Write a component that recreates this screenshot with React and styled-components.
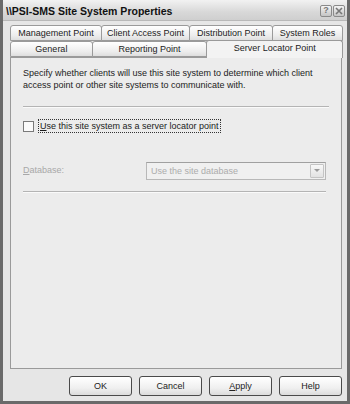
import React from "react";
import styled, { createGlobalStyle } from "styled-components";

const GlobalStyle = createGlobalStyle`
  html, body {
    margin: 0;
    padding: 0;
    background: #e4e4e4;
  }
  * {
    box-sizing: border-box;
  }
`;

const Window = styled.div`
  width: 350px;
  height: 404px;
  display: flex;
  flex-direction: column;
  background: #e6e6e6;
  border-left: 3px solid #6a6a6a;
  border-right: 3px solid #6a6a6a;
  border-bottom: 3px solid #6a6a6a;
  font-family: "Liberation Sans", Arial, sans-serif;
  font-size: 9px;
  color: #1a1a1a;
  overflow: hidden;
`;

const TitleBar = styled.div`
  height: 21px;
  margin: 0 -3px;
  padding: 1px 5px 0 6px;
  display: flex;
  align-items: center;
  justify-content: space-between;
  background: linear-gradient(#f2f2f2, #d8d8d8 60%, #cfcfcf);
  border-bottom: 1px solid #b8b8b8;
`;

const Title = styled.div`
  font-weight: bold;
  font-size: 10.5px;
  color: #111;
`;

const Caption = styled.div`
  display: flex;
  gap: 1px;
`;

const CaptionButton = styled.div`
  width: 12px;
  height: 12px;
  border: 1px solid #8a8a8a;
  border-radius: 2px;
  background: linear-gradient(#f4f4f4, #c4c4c4);
  display: flex;
  align-items: center;
  justify-content: center;
  font-size: 9px;
  font-weight: bold;
  color: #777;
  line-height: 1;
`;

const Body = styled.div`
  flex: 1;
  display: flex;
  flex-direction: column;
  padding: 4px 5px 0 7px;
`;

const TabRow = styled.div`
  display: flex;
  height: 16px;
  position: relative;
  z-index: ${(p) => p.$z};
`;

const Tab = styled.div`
  width: ${(p) => p.$w}px;
  height: ${(p) => (p.$active ? 18 : 16)}px;
  margin-top: ${(p) => (p.$active ? -1 : 0)}px;
  border: 1px solid #9a9a9a;
  border-bottom: ${(p) => (p.$active ? "none" : "1px solid #9a9a9a")};
  border-radius: 3px 3px 0 0;
  background: ${(p) =>
    p.$active ? "#f3f3f3" : "linear-gradient(#ffffff, #ececec 70%, #dedede)"};
  display: flex;
  align-items: center;
  justify-content: center;
  font-size: 9px;
  color: #222;
  white-space: nowrap;
  margin-right: -1px;
  padding-bottom: ${(p) => (p.$active ? 3 : 0)}px;
`;

const Panel = styled.div`
  height: 312px;
  border: 1px solid #9a9a9a;
  background: #ececec;
  padding: 9px 12px 0 12px;
  display: flex;
  flex-direction: column;
`;

const Description = styled.p`
  margin: 0;
  line-height: 12px;
  color: #222;
`;

const Separator = styled.div`
  height: 2px;
  border-top: 1px solid #b4b4b4;
  border-bottom: 1px solid #fafafa;
  margin: ${(p) => p.$m};
`;

const CheckRow = styled.label`
  display: flex;
  align-items: center;
  gap: 5px;
`;

const CheckBox = styled.span`
  width: 11px;
  height: 11px;
  border: 1px solid #7a7a7a;
  background: #fbfbfb;
`;

const FocusLabel = styled.span`
  outline: 1px dotted #333;
  outline-offset: 0px;
  padding: 0 1px;
  line-height: 12px;
`;

const FieldRow = styled.div`
  display: flex;
  align-items: center;
  justify-content: space-between;
  margin-top: 30px;
  padding-right: 3px;
`;

const FieldLabel = styled.span`
  color: #a8a8a8;
  margin-top: -3px;
`;

const Select = styled.div`
  width: 180px;
  height: 18px;
  border: 1px solid #b8b8b8;
  border-top-color: #a0a0a0;
  background: #f0f0f0;
  display: flex;
  align-items: center;
  justify-content: space-between;
  padding: 0 1px 0 4px;
  color: #acacac;
`;

const Arrow = styled.span`
  width: 14px;
  height: 14px;
  border: 1px solid #c4c4c4;
  border-radius: 1px;
  background: linear-gradient(#f8f8f8, #e2e2e2);
  display: flex;
  align-items: center;
  justify-content: center;
`;

const Footer = styled.div`
  display: flex;
  justify-content: flex-end;
  gap: 7px;
  padding: 7px 0 0 0;
`;

const Button = styled.button`
  width: 63px;
  height: 20px;
  border: 1px solid #4a4a4a;
  border-radius: 3px;
  background: linear-gradient(#ffffff, #f0f0f0 60%, #dcdcdc);
  font-family: "Liberation Sans", Arial, sans-serif;
  font-size: 9px;
  color: #222;
  padding: 0;
`;

const Mnemonic = styled.span`
  text-decoration: underline;
`;

export default function App() {
  return (
    <>
      <GlobalStyle />
      <Window>
        <TitleBar>
          <Title>\\PSI-SMS Site System Properties</Title>
          <Caption>
            <CaptionButton>?</CaptionButton>
            <CaptionButton>
              <svg width="8" height="8" viewBox="0 0 8 8">
                <path d="M1 1L7 7M7 1L1 7" stroke="#777" strokeWidth="1.6" />
              </svg>
            </CaptionButton>
          </Caption>
        </TitleBar>
        <Body>
          <TabRow $z={1}>
            <Tab $w={92}>Management Point</Tab>
            <Tab $w={89}>Client Access Point</Tab>
            <Tab $w={84}>Distribution Point</Tab>
            <Tab $w={71}>System Roles</Tab>
          </TabRow>
          <TabRow $z={2}>
            <Tab $w={83}>General</Tab>
            <Tab $w={116}>Reporting Point</Tab>
            <Tab $w={137} $active>
              Server Locator Point
            </Tab>
          </TabRow>
          <Panel>
            <Description>
              Specify whether clients will use this site system to determine
              which client access point or other site systems to communicate
              with.
            </Description>
            <Separator $m="15px 0 12px 0" />
            <CheckRow>
              <CheckBox />
              <FocusLabel>
                <Mnemonic>U</Mnemonic>se this site system as a server locator
                point
              </FocusLabel>
            </CheckRow>
            <FieldRow>
              <FieldLabel>
                <Mnemonic>D</Mnemonic>atabase:
              </FieldLabel>
              <Select>
                Use the site database
                <Arrow>
                  <svg width="6" height="4" viewBox="0 0 6 4">
                    <path d="M0 0H6L3 3Z" fill="#9a9a9a" />
                  </svg>
                </Arrow>
              </Select>
            </FieldRow>
            <Separator $m="11px 3px 0 0" />
          </Panel>
          <Footer>
            <Button>OK</Button>
            <Button>Cancel</Button>
            <Button>
              <Mnemonic>A</Mnemonic>pply
            </Button>
            <Button>Help</Button>
          </Footer>
        </Body>
      </Window>
    </>
  );
}
